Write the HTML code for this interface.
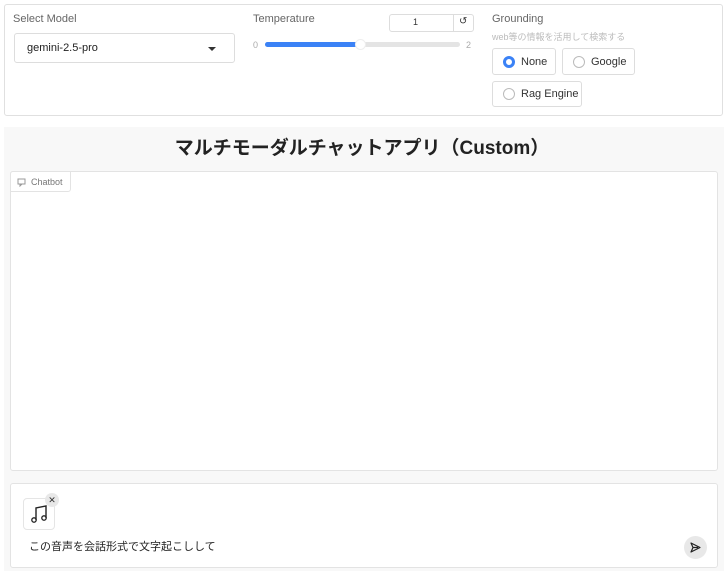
<!DOCTYPE html>
<html><head><meta charset="utf-8">
<style>
*{box-sizing:border-box;margin:0;padding:0}
body{width:724px;height:571px;background:#fff;font-family:"Liberation Sans","Noto Sans CJK JP",sans-serif;position:relative;overflow:hidden;color:#333}
.abs{position:absolute}
.top{left:4px;top:4px;width:719px;height:112px;border:1px solid #e0e0e0;border-radius:3px}
.lbl{font-size:11px;color:#666}
.sel{left:14px;top:33px;width:221px;height:30px;border:1px solid #ddd;border-radius:3px;font-size:11px;color:#222;padding:0 12px;line-height:28px}
.caret{right:18px;top:13px;width:0;height:0;border-left:4px solid transparent;border-right:4px solid transparent;border-top:4px solid #333}
.radio{border:1px solid #ddd;border-radius:3px;font-size:11px;color:#333;padding-left:28px;display:flex;align-items:center}
.radio i{position:absolute;left:10px;top:50%;margin-top:-6px;width:12px;height:12px;border:1px solid #bbb;border-radius:50%}
.radio i.on{border:3px solid #3b82f6;background:#fff}
.grey{left:4px;top:127px;width:720px;height:444px;background:#f8f8f8}
.chat{left:10px;top:171px;width:708px;height:300px;background:#fff;border:1px solid #e3e3e3;border-radius:3px}
.inp{left:10px;top:483px;width:708px;height:85px;background:#fff;border:1px solid #e3e3e3;border-radius:3px}
</style></head><body>
<div class="abs top"></div>
<div class="abs lbl" style="left:13px;top:13px">Select Model</div>
<div class="abs sel">gemini-2.5-pro<div class="abs caret"></div></div>
<div class="abs lbl" style="left:253px;top:13px">Temperature</div>
<div class="abs" style="left:389px;top:14px;width:85px;height:18px;border:1px solid #ddd;border-radius:3px"></div>
<div class="abs" style="left:453px;top:14px;width:1px;height:18px;background:#ddd"></div>
<div class="abs" style="left:413px;top:17px;font-size:9px;color:#333">1</div>
<div class="abs" style="left:459px;top:16px;font-size:10px;color:#333">↺</div>
<div class="abs" style="left:253px;top:40px;font-size:9px;color:#aaa">0</div>
<div class="abs" style="left:466px;top:40px;font-size:9px;color:#aaa">2</div>
<div class="abs" style="left:265px;top:42px;width:195px;height:5px;background:#e4e4e4;border-radius:3px"></div>
<div class="abs" style="left:265px;top:42px;width:92px;height:5px;background:#3b82f6;border-radius:3px"></div>
<div class="abs" style="left:355px;top:39px;width:11px;height:11px;background:#fff;border-radius:50%;border:1px solid #eee"></div>
<div class="abs lbl" style="left:492px;top:13px">Grounding</div>
<div class="abs" style="left:492px;top:30px;font-size:9px;color:#bbb">web等の情報を活用して検索する</div>
<div class="abs radio" style="left:492px;top:48px;width:64px;height:27px"><i class="on"></i>None</div>
<div class="abs radio" style="left:562px;top:48px;width:73px;height:27px"><i></i>Google</div>
<div class="abs radio" style="left:492px;top:81px;width:90px;height:26px"><i></i>Rag Engine</div>
<div class="abs grey"></div>
<div class="abs" style="left:0;top:133px;width:724px;text-align:center;font-size:19px;font-weight:bold;color:#222">マルチモーダルチャットアプリ（Custom）</div>
<div class="abs chat"></div>
<div class="abs" style="left:10px;top:171px;width:61px;height:21px;border:1px solid #e3e3e3;border-radius:3px 0 3px 0;background:#fff;font-size:9px;color:#777;padding:5px 0 0 20px">Chatbot
<svg class="abs" style="left:6px;top:6px" width="9" height="9" viewBox="0 0 9 9"><rect x="1" y="1" width="7" height="5" fill="none" stroke="#999"/><path d="M3 6v2l2-2" fill="none" stroke="#999"/></svg></div>
<div class="abs inp"></div>
<div class="abs" style="left:23px;top:498px;width:32px;height:32px;background:#fff;border:1px solid #e5e5e5;border-radius:4px">
<svg class="abs" style="left:6px;top:5px" width="20" height="20" viewBox="0 0 20 20"><path d="M6 16V4l10-2v12" fill="none" stroke="#222" stroke-width="1.4"/><circle cx="4" cy="16" r="2.2" fill="none" stroke="#222" stroke-width="1.3"/><circle cx="14" cy="14" r="2.2" fill="none" stroke="#222" stroke-width="1.3"/></svg></div>
<div class="abs" style="left:45px;top:493px;width:14px;height:14px;border-radius:50%;background:#e8e8e8;font-size:9px;text-align:center;line-height:14px;color:#333">✕</div>
<div class="abs" style="left:29px;top:538px;font-size:11px;color:#222">この音声を会話形式で文字起こしして</div>
<div class="abs" style="left:684px;top:536px;width:23px;height:23px;border-radius:50%;background:#e8e8e8">
<svg class="abs" style="left:5px;top:5px" width="13" height="13" viewBox="0 0 13 13"><path d="M2 2l9 4.5L2 11l2-4.5z M4 6.5h5" fill="none" stroke="#222" stroke-width="1.2" stroke-linejoin="round"/></svg></div>
</body></html>
